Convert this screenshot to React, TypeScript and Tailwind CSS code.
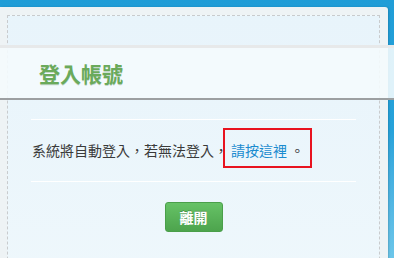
const font = { fontFamily: '"Noto Sans CJK TC", "Noto Sans", sans-serif' };

export default function App() {
  return (
    <div
      className="h-[258px] w-[394px] overflow-hidden bg-gradient-to-b from-[#209dd7] via-[#26a2da] to-[#6cc6ea] pt-[7px]"
      style={font}
    >
      <div className="h-[300px] w-[388px] rounded-tr-[3px] bg-[#eef3f5] pt-[8px] pl-[7px] pr-[8px] shadow-[1px_0_2px_rgba(0,0,0,0.15)]">
        <div className="h-[300px] border border-dashed border-[#c9cbcd] bg-gradient-to-b from-[#e8f4fb] to-[#eff8fc] pt-[29px]">
          <div className="-ml-[8px] flex h-[55px] w-[394px] items-center border-t-[3px] border-b-[2px] border-t-[#e7e9ea] border-b-[#9c9fa1] bg-[#f4fbfd]/90 pl-[39px]">
            <h1 className="text-[21px] font-bold leading-none text-[#6aaa5b] [text-shadow:0_1px_0_rgba(60,110,50,0.25)]">
              登入帳號
            </h1>
          </div>
          <div className="px-[23px] pt-[19px]">
            <div className="h-px bg-white" />
            <p className="mt-[20px] pl-px text-[14px] leading-[20px] text-[#3a3a3a]">
              系統將自動登入，若無法登入，
              <span className="relative ml-[3px]">
                <a href="#" className="text-[#1a8bcf]">
                  請按這裡
                </a>{" "}
                。
                <span className="absolute -left-[8px] -top-[12px] h-[40px] w-[89px] border-2 border-[#e8131f]" />
              </span>
            </p>
            <div className="mt-[21px] h-px bg-white" />
            <div className="mt-[20px] flex justify-center">
              <button className="h-[30px] w-[58px] rounded-[3px] border border-[#4a9f4a] bg-gradient-to-b from-[#66c266] to-[#4da44d] text-[14px] font-bold text-white [text-shadow:0_-1px_0_rgba(0,0,0,0.2)]">
                離開
              </button>
            </div>
          </div>
        </div>
      </div>
    </div>
  );
}
